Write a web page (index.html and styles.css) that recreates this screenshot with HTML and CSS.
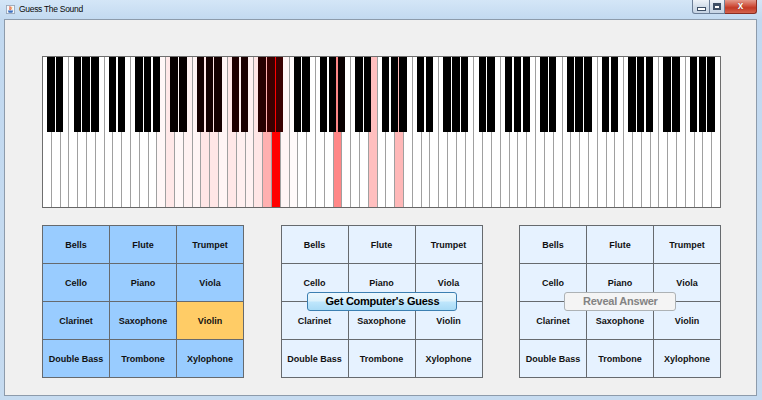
FILE: index.html
```html
<!DOCTYPE html>
<html>
<head>
<meta charset="utf-8">
<title>Guess The Sound</title>
<link rel="stylesheet" href="styles.css">
</head>
<body>
<div class="window">
  <div class="titlebar">
    <svg class="app-icon" width="9" height="9" viewBox="0 0 10 10">
      <rect x="0.5" y="0.5" width="9" height="9" fill="#f4f7fb" stroke="#9aa8b8"/>
      <path d="M4 1.5 C6 3 3 4 5 5.5" stroke="#e2401c" stroke-width="1.3" fill="none"/>
      <path d="M6 2 C7 3 5.5 4 6.5 5" stroke="#f08a1c" stroke-width="1" fill="none"/>
      <path d="M2 6 H8 L7 8.5 H3 Z" fill="#3b6fc0"/>
    </svg>
    <span class="title">Guess The Sound</span>
    <div class="controls">
      <div class="ctl min"><span class="min-glyph"></span></div>
      <div class="ctl max"><span class="max-glyph"></span></div>
      <div class="ctl close"><span class="close-glyph">x</span></div>
    </div>
  </div>
  <div class="client">
    <div class="piano" id="piano"></div>
    <div class="panels">
      <div class="panel">
        <div class="cell sel">Bells</div>
        <div class="cell sel">Flute</div>
        <div class="cell sel">Trumpet</div>
        <div class="cell sel">Cello</div>
        <div class="cell sel">Piano</div>
        <div class="cell sel">Viola</div>
        <div class="cell sel">Clarinet</div>
        <div class="cell sel">Saxophone</div>
        <div class="cell pick">Violin</div>
        <div class="cell sel">Double Bass</div>
        <div class="cell sel">Trombone</div>
        <div class="cell sel">Xylophone</div>
      </div>
      <div class="panel">
        <div class="cell pale">Bells</div>
        <div class="cell pale">Flute</div>
        <div class="cell pale">Trumpet</div>
        <div class="cell pale">Cello</div>
        <div class="cell pale">Piano</div>
        <div class="cell pale">Viola</div>
        <div class="cell pale">Clarinet</div>
        <div class="cell pale">Saxophone</div>
        <div class="cell pale">Violin</div>
        <div class="cell pale">Double Bass</div>
        <div class="cell pale">Trombone</div>
        <div class="cell pale">Xylophone</div>
        <button class="overlay-btn guess">Get Computer's Guess</button>
      </div>
      <div class="panel">
        <div class="cell pale">Bells</div>
        <div class="cell pale">Flute</div>
        <div class="cell pale">Trumpet</div>
        <div class="cell pale">Cello</div>
        <div class="cell pale">Piano</div>
        <div class="cell pale">Viola</div>
        <div class="cell pale">Clarinet</div>
        <div class="cell pale">Saxophone</div>
        <div class="cell pale">Violin</div>
        <div class="cell pale">Double Bass</div>
        <div class="cell pale">Trombone</div>
        <div class="cell pale">Xylophone</div>
        <button class="overlay-btn reveal" disabled>Reveal Answer</button>
      </div>
    </div>
  </div>
</div>
<script src="script.js"></script>
</body>
</html>
```

FILE: styles.css
```css
html, body {
  margin: 0;
  padding: 0;
}
body {
  width: 762px;
  height: 400px;
  overflow: hidden;
  font-family: "Liberation Sans", Arial, sans-serif;
}
.window {
  width: 762px;
  height: 400px;
  box-sizing: border-box;
  display: flex;
  flex-direction: column;
  padding-bottom: 4px;
  background: linear-gradient(to bottom, #d4e6f7 0px, #c2d9f0 20px, #c6dbf0 100%);
}
.titlebar {
  height: 19px;
  display: flex;
  align-items: center;
  padding-left: 6px;
  position: relative;
}
.app-icon {
  margin-right: 4px;
  margin-top: -1px;
}
.title {
  font-size: 8.5px;
  letter-spacing: -0.3px;
  color: #0a0a0a;
  margin-top: -1px;
}
.controls {
  margin-left: auto;
  margin-right: 5px;
  align-self: flex-start;
  display: flex;
  height: 14px;
}
.ctl {
  height: 14px;
  box-sizing: border-box;
  border: 1px solid #6c7f98;
  border-top: none;
  display: flex;
  align-items: center;
  justify-content: center;
  position: relative;
}
.min {
  width: 18px;
  border-radius: 0 0 0 3px;
  background: linear-gradient(to bottom, #eef3f9, #d3deea 50%, #c6d4e4);
}
.max {
  width: 15px;
  border-left: none;
  background: linear-gradient(to bottom, #eef3f9, #d3deea 50%, #c6d4e4);
}
.close {
  width: 32px;
  border-left: none;
  border-color: #8a2d22;
  border-radius: 0 0 3px 0;
  background: linear-gradient(to bottom, #e49a8c, #d0523f 45%, #c33a26 60%, #d4634d);
}
.min-glyph {
  width: 7px;
  height: 2px;
  background: #fff;
  border: 1px solid #3d4f66;
  margin-top: 5px;
}
.max-glyph {
  width: 6px;
  height: 4px;
  border: 1px solid #3d4f66;
  border-top-width: 2px;
  background: #fff;
  box-shadow: inset 0 0 0 1px #3d4f66;
}
.close-glyph {
  color: #fff;
  font-weight: bold;
  font-size: 10px;
  line-height: 10px;
  margin-top: -2px;
  text-shadow: 0 0 1px #6a1a10;
}
.client {
  flex: 1;
  margin: 0 5px 0 4px;
  background: #f0f0f0;
  border: 1px solid #8d9bab;
  padding: 36px 0 0 37px;
}
.piano {
  width: 679px;
  height: 152px;
}
.piano svg {
  display: block;
}
.panels {
  margin-top: 17px;
  width: 679px;
  display: flex;
  justify-content: space-between;
}
.panel {
  position: relative;
  width: 202px;
  height: 153px;
  box-sizing: border-box;
  padding: 1px;
  gap: 1px;
  background: #666a6e;
  display: grid;
  grid-template-columns: repeat(3, 1fr);
  grid-template-rows: repeat(4, 1fr);
}
.cell {
  display: flex;
  align-items: center;
  justify-content: center;
  font-weight: bold;
  font-size: 9px;
  color: #111;
}
.sel {
  background: #99ccff;
}
.pick {
  background: #ffcc66;
}
.pale {
  background: #e6f2ff;
}
.overlay-btn {
  position: absolute;
  top: 67px;
  left: 50%;
  transform: translateX(-50%);
  height: 19px;
  box-sizing: border-box;
  padding: 0 18px;
  border-radius: 3px;
  font-family: "Liberation Sans", Arial, sans-serif;
  font-weight: bold;
  font-size: 11px;
  letter-spacing: -0.25px;
  line-height: 17px;
  white-space: nowrap;
}
.guess {
  width: 150px;
  color: #000;
  border: 1px solid #3c7fb1;
  background: linear-gradient(to bottom, #ecf7fd 0%, #dbf1fc 48%, #bfe6fc 52%, #a9dbf6 100%);
}
.reveal {
  width: 112px;
  color: #838383;
  border: 1px solid #adb2b5;
  background: #f4f4f4;
}
```

FILE: script.js
```js
(function () {
  var W = 679, H = 152, N = 77;
  var whiteT = {13: .03, 14: .09, 15: .03, 16: .05, 17: .04, 18: .1, 19: .1, 20: .04,
    21: .09, 22: .06, 23: .05, 24: .1, 25: .31, 26: 1, 27: .04, 28: .02, 33: .47, 37: .25, 40: .28};
  var blackV = {15: 6, 16: 6, 18: 20, 19: 20, 20: 20, 22: 30, 23: 26, 25: 38, 26: 58, 27: 58, 34: 8};
  var NS = 'http://www.w3.org/2000/svg';
  var svg = document.createElementNS(NS, 'svg');
  svg.setAttribute('width', W);
  svg.setAttribute('height', H);
  svg.setAttribute('shape-rendering', 'crispEdges');
  function rect(x, y, w, h, fill) {
    var r = document.createElementNS(NS, 'rect');
    r.setAttribute('x', x);
    r.setAttribute('y', y);
    r.setAttribute('width', w);
    r.setAttribute('height', h);
    r.setAttribute('fill', fill);
    svg.appendChild(r);
  }
  var kw = (W - 1) / N;
  var i;
  for (i = 0; i < N; i++) {
    var x0 = Math.round(i * kw), x1 = Math.round((i + 1) * kw);
    var t = whiteT[i] || 0;
    var g = Math.round(255 * (1 - t));
    rect(x0, 0, x1 - x0, H, 'rgb(255,' + g + ',' + g + ')');
  }
  for (i = 1; i < N; i++) {
    rect(Math.round(i * kw), 0, 1, H, '#a0a0a0');
  }
  var hasBlack = [true, true, false, true, true, true, false];
  for (i = 0; i < N - 1; i++) {
    if (!hasBlack[i % 7]) continue;
    var b = (i + 1) * kw;
    var bx0 = Math.round(b - 3.7), bx1 = Math.round(b + 3.7);
    var v = blackV[i + 1] || 0;
    rect(bx0, 1, bx1 - bx0, 75, 'rgb(' + v + ',0,0)');
  }
  rect(0, 0, W, 1, '#6e6e6e');
  rect(0, H - 1, W, 1, '#666666');
  rect(0, 0, 1, H, '#6e6e6e');
  rect(W - 1, 0, 1, H, '#6e6e6e');
  document.getElementById('piano').appendChild(svg);
})();
```
